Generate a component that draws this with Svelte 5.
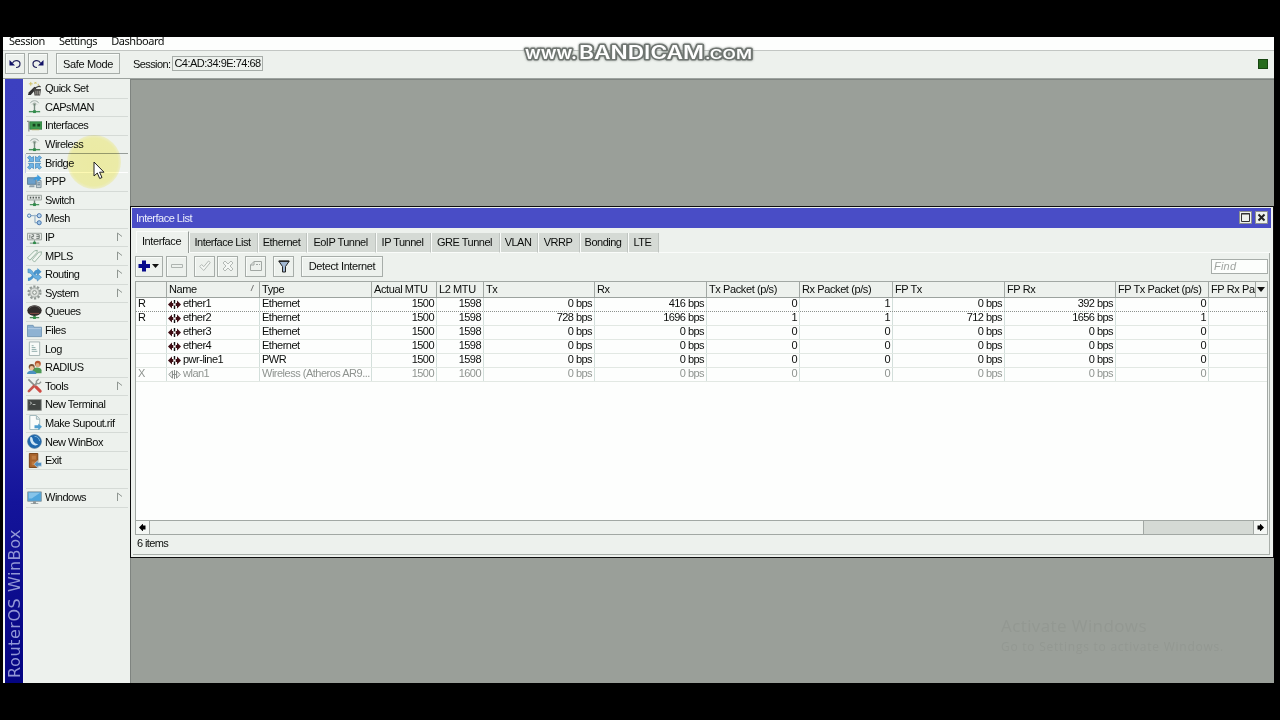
<script lang="ts">
	interface MenuItem {
		label: string;
		icon: string;
		sub?: boolean;
	}

	interface Column {
		label: string;
		width: number;
		right?: boolean;
	}

	const menu: (MenuItem | null)[] = [
		{ label: 'Quick Set', icon: 'wand' },
		{ label: 'CAPsMAN', icon: 'antenna' },
		{ label: 'Interfaces', icon: 'card' },
		{ label: 'Wireless', icon: 'antenna' },
		{ label: 'Bridge', icon: 'bridge' },
		{ label: 'PPP', icon: 'ppp' },
		{ label: 'Switch', icon: 'switch' },
		{ label: 'Mesh', icon: 'mesh' },
		{ label: 'IP', icon: 'ip', sub: true },
		{ label: 'MPLS', icon: 'mpls', sub: true },
		{ label: 'Routing', icon: 'routing', sub: true },
		{ label: 'System', icon: 'gear', sub: true },
		{ label: 'Queues', icon: 'queues' },
		{ label: 'Files', icon: 'folder' },
		{ label: 'Log', icon: 'log' },
		{ label: 'RADIUS', icon: 'users' },
		{ label: 'Tools', icon: 'tools', sub: true },
		{ label: 'New Terminal', icon: 'terminal' },
		{ label: 'Make Supout.rif', icon: 'page' },
		{ label: 'New WinBox', icon: 'winbox' },
		{ label: 'Exit', icon: 'door' },
		null,
		{ label: 'Windows', icon: 'monitor', sub: true },
	];

	const tabs = [
		{ label: 'Interface', width: 53 },
		{ label: 'Interface List', width: 69 },
		{ label: 'Ethernet', width: 49 },
		{ label: 'EoIP Tunnel', width: 69 },
		{ label: 'IP Tunnel', width: 55 },
		{ label: 'GRE Tunnel', width: 69 },
		{ label: 'VLAN', width: 38 },
		{ label: 'VRRP', width: 42 },
		{ label: 'Bonding', width: 48 },
		{ label: 'LTE', width: 31 },
	];

	const columns: Column[] = [
		{ label: '', width: 31 },
		{ label: 'Name', width: 93 },
		{ label: 'Type', width: 112 },
		{ label: 'Actual MTU', width: 65, right: true },
		{ label: 'L2 MTU', width: 47, right: true },
		{ label: 'Tx', width: 111, right: true },
		{ label: 'Rx', width: 112, right: true },
		{ label: 'Tx Packet (p/s)', width: 93, right: true },
		{ label: 'Rx Packet (p/s)', width: 93, right: true },
		{ label: 'FP Tx', width: 112, right: true },
		{ label: 'FP Rx', width: 111, right: true },
		{ label: 'FP Tx Packet (p/s)', width: 93, right: true },
		{ label: 'FP Rx Pa', width: 58 },
	];

	const idle = ['0 bps', '0 bps', '0', '0', '0 bps', '0 bps', '0', ''];
	const rows: string[][] = [
		['R', 'ether1', 'Ethernet', '1500', '1598', '0 bps', '416 bps', '0', '1', '0 bps', '392 bps', '0', ''],
		['R', 'ether2', 'Ethernet', '1500', '1598', '728 bps', '1696 bps', '1', '1', '712 bps', '1656 bps', '1', ''],
		['', 'ether3', 'Ethernet', '1500', '1598', ...idle],
		['', 'ether4', 'Ethernet', '1500', '1598', ...idle],
		['', 'pwr-line1', 'PWR', '1500', '1598', ...idle],
		['X', 'wlan1', 'Wireless (Atheros AR9...', '1500', '1600', ...idle],
	];

	let hovered = $state('Bridge');
	let activeTab = $state('Interface');
	let selected = $state(0);
</script>

{#snippet icon(name: string)}
	<svg class="icon" viewBox="0 0 16 16" width="15" height="15">
		{#if name === 'wand'}
			<path d="m1 15 1-3 6-6 2 2-6 7z" fill="#2f2f2f" />
			<path d="M7 8.500h8l-1 7H8z" fill="#4a4946" />
			<path d="M9.500 10.500v4M11.500 10.500v4M13.300 10.500v4" stroke="#c9c7bf" stroke-width=".7" />
			<path d="m7 8 6-2.500 1.500 1" fill="none" stroke="#444" stroke-width="1.300" />
			<path d="M4 1v4M2 3h4M8 1l2 2M10 1 8 3M12 3v2" stroke="#cdbf62" stroke-width="1" />
		{:else if name === 'antenna'}
			<path d="M3.500 4.500c1.500-3.500 7.500-3.500 9 0M5.500 5.800c1-2 4-2 5 0" fill="none" stroke="#9ba7a3" />
			<circle cx="8" cy="6" r="1.200" fill="#69806f" />
			<path d="M8 6v7" stroke="#788c80" stroke-width="1.500" />
			<path d="M2 13.500h12" stroke="#45925a" stroke-width="1.500" />
			<path d="M6.500 12h3v3h-3z" fill="#2f8a49" />
		{:else if name === 'card'}
			<path d="M0 3.500h2v11" fill="none" stroke="#8b928e" stroke-width="1.300" />
			<path d="M3 4h13v8H3z" fill="#3f9a4f" stroke="#2c713b" stroke-width=".7" />
			<path d="M6 6h3v3H6zM11 6h3v3h-3z" fill="#18451f" />
			<path d="M5 12.500h8" stroke="#aaa25a" />
		{:else if name === 'bridge'}
			<g fill="#6fb3e4" stroke="#347eb9" stroke-width=".7">
				<path d="m.500 3 2.300-2.300 2.300 2.300L7 1.500V7H1.500l1.700-1.800z" />
				<path d="M15.500 3 13.200.700 10.900 3 9 1.500V7h5.500l-1.700-1.800z" />
				<path d="m.500 13 2.300 2.300L5.100 13 7 14.500V9H1.500l1.700 1.800z" />
				<path d="m15.500 13-2.300 2.300-2.300-2.300L9 14.500V9h5.500l-1.700 1.800z" />
			</g>
		{:else if name === 'ppp'}
			<path d="M.500 4h9v7h-9z" fill="#6b9fca" stroke="#5f7f98" />
			<path d="M3 12h5v2H2z" fill="#8ea0aa" />
			<path d="M10 7h5v7.500h-5z" fill="#c7d3d8" stroke="#7d909a" />
			<path d="M11 9.500h3M11 11.500h3" stroke="#55738a" />
			<path d="M7 5.500c1-2 2-2.500 4-2.500V.500l4.500 4L11 8.500V6C9 6 8 6 7 7z" fill="#3d9bdc" />
		{:else if name === 'switch'}
			<path d="M.500 3.500h15v5H.500z" fill="#e1e5e2" stroke="#9aa39d" />
			<path d="M3 6h1.500M6 6h1.500M9 6h1.500M12 6h1.500" stroke="#4d5651" stroke-width="1.800" />
			<path d="M8 9v4" stroke="#71847a" stroke-width="1.500" />
			<path d="M3 13.500h10" stroke="#45925a" stroke-width="1.300" />
			<path d="M6.500 12h3v3h-3z" fill="#2f8a49" />
		{:else if name === 'mesh'}
			<path d="M4 5h4M8.500 4v8.500H12M9 5h3" fill="none" stroke="#7ea0bd" />
			<circle cx="2.300" cy="5" r="1.800" fill="#dce9f5" stroke="#4779ae" />
			<circle cx="13" cy="5" r="2.200" fill="#bcd8ee" stroke="#426faa" />
			<circle cx="13" cy="12.500" r="2.200" fill="#9fc6e7" stroke="#426faa" />
		{:else if name === 'ip'}
			<path d="M.500 3.500h15v7H.500z" fill="#e6e9e6" stroke="#969f99" />
			<path d="M3 5v4M5 5h2v2H5v2h2M10 5h3v4h-3M10 7h3" fill="none" stroke="#6f7873" />
			<path d="M8 11v3M3 14h10" stroke="#699078" />
			<path d="M6.500 12.500h3V15h-3z" fill="#2f8a49" />
		{:else if name === 'mpls'}
			<g fill="#f1f6f1" stroke="#8dab98" stroke-width=".9">
				<path d="M.500 10.500 8 3l3-.5-.5 2.500L3 13z" />
				<path d="m5.500 12.500 7-8 3-.5-.5 3L8 15z" />
			</g>
		{:else if name === 'routing'}
			<path d="M1 11.500c6 0 5-8.500 10-8.500V1l4.500 4L11 9V7c-3 0-4 8-10 8z" fill="#4b96cd" />
			<path d="M1 2c6 0 5 7 10 7V7l4.500 4-4.500 4v-2C6 13 6 6 1 6z" fill="#68afe0" stroke="#3679ae" stroke-width=".5" />
		{:else if name === 'gear'}
			<circle cx="8" cy="8" r="6.300" fill="none" stroke="#929995" stroke-width="2.500" stroke-dasharray="2.300 1.650" />
			<circle cx="8" cy="8" r="5" fill="#dadeda" stroke="#989f9b" />
			<circle cx="8" cy="8" r="2" fill="#edf1ed" stroke="#858d88" />
		{:else if name === 'queues'}
			<path d="M8 9v6M3 14.500h10" stroke="#4e8b5d" stroke-width="1.500" />
			<path d="M6.500 13h3v3h-3z" fill="#37934c" />
			<ellipse cx="8" cy="7" rx="7.700" ry="5.700" fill="#302b2a" />
			<path d="M2 5c4-4 8-4 12 0" fill="none" stroke="#6d6664" />
			<path d="M3 10h10" stroke="#8b4e49" />
		{:else if name === 'folder'}
			<path d="M.500 2.500h6l1 2h8v10H.500z" fill="#8eb2d2" stroke="#7397b6" />
			<path d="M1 6h14" stroke="#b5cee4" />
		{:else if name === 'log'}
			<path d="M2.500 1h11v14.500h-11z" fill="#f7faf8" stroke="#a2b2b1" />
			<path d="M5 5h2M5 7h4M5 9h5M5 11h6" stroke="#8daaa8" />
		{:else if name === 'users'}
			<path d="M6 11c0-4 9.500-4 9.500 0v3H6z" fill="#4d9a55" />
			<circle cx="11.500" cy="4" r="3.200" fill="#b5562f" />
			<circle cx="11.300" cy="5.500" r="2.200" fill="#dfab82" />
			<path d="M0 15c0-5 10-5 10 0z" fill="#4b91c1" />
			<circle cx="5" cy="7.500" r="3.200" fill="#765034" />
			<circle cx="5" cy="8.800" r="2.300" fill="#edc39a" />
		{:else if name === 'tools'}
			<path d="m1.500 1.500 7 7" stroke="#8b918e" stroke-width="1.800" />
			<path d="m9.500 9.500 4.500 4.500" stroke="#cf4a43" stroke-width="3.200" stroke-linecap="round" />
			<path d="m2 14 6-6" stroke="#c4574e" stroke-width="2.800" stroke-linecap="round" />
			<path d="m8 8 3-3" stroke="#929995" stroke-width="2" />
			<path d="m12.500 1-2.500 2.500v2.500h3L15 4" fill="none" stroke="#929995" stroke-width="1.500" />
		{:else if name === 'terminal'}
			<path d="M.700 2.700h14.600v11.600H.700z" fill="#404442" stroke="#969c98" />
			<path d="m3 5 2 1.500L3 8M6 8h3" fill="none" stroke="#d8ddda" stroke-width=".8" />
		{:else if name === 'page'}
			<path d="M3 .500h7l3.500 3.500v11.500H3z" fill="#fafcfa" stroke="#9db5ba" />
			<path d="M10 1v3.500h3" fill="#dce7e9" stroke="#9db5ba" />
			<path d="M8 11h4V9l4 3.500L12 16v-2H8z" fill="#4d9dce" />
		{:else if name === 'winbox'}
			<circle cx="8" cy="8" r="7.300" fill="#1f68ad" stroke="#3a6c9b" stroke-width=".8" />
			<path d="M3.500 3.500c2-1 2.500 1 2.800 3s3 4.500 5.700 4.500c-3 3-10 0-8.500-7.500z" fill="#cfe6f5" />
			<path d="M8 2.500c3 0 5 2 5.500 5" fill="none" stroke="#79b5dd" />
		{:else if name === 'door'}
			<path d="M2.500.500h9v15h-9z" fill="#a8632c" stroke="#754014" />
			<path d="M5 3h4.500v4H5zM5 9h4.500v4H5z" fill="#bd7b42" />
			<path d="M15.500 10h-4V8l-4 4 4 4v-2h4z" fill="#528ebd" stroke="#d7e6ef" stroke-width=".6" />
		{:else if name === 'monitor'}
			<path d="M.700 2h14.600v10H.700z" fill="#4fa5dc" stroke="#8b9aa0" />
			<path d="M2 3h12L5 9H2z" fill="#86c4ea" />
			<path d="M6.500 12h3v2h-3zM4 14h8v1H4z" fill="#8c9597" />
		{/if}
	</svg>
{/snippet}

<div class="screen">
	<div class="app">
		<nav class="menubar">
			<span>Session</span>
			<span>Settings</span>
			<span>Dashboard</span>
		</nav>

		<header class="toolbar">
			<button class="btn" aria-label="Undo">
				<svg width="12" height="12" viewBox="0 0 12 12">
					<path d="M3.500 5c2-4 7.500-2.500 7.500.8 0 2-1.500 3.700-4 3.700" fill="none" stroke="#25255f" stroke-width="1.200" />
					<path d="M.500 2v5.500H6z" fill="#111166" />
				</svg>
			</button>
			<button class="btn" aria-label="Redo">
				<svg width="12" height="12" viewBox="0 0 12 12">
					<path d="M8.500 5C6.500 1 1 2.500 1 5.800c0 2 1.500 3.700 4 3.700" fill="none" stroke="#25255f" stroke-width="1.200" />
					<path d="M11.500 2v5.500H6z" fill="#111166" />
				</svg>
			</button>
			<button class="btn safe">Safe Mode</button>
			<span class="session">Session:</span>
			<span class="address">C4:AD:34:9E:74:68</span>
			<span class="status-led"></span>
		</header>

		<div class="body">
			<div class="brand"><span>RouterOS WinBox</span></div>

			<aside class="sidebar">
				{#each menu as item}
					{#if item}
						<div
							class="menu-item"
							class:hovered={hovered === item.label}
							role="menuitem"
							tabindex="-1"
							onmouseenter={() => (hovered = item.label)}
						>
							{@render icon(item.icon)}
							<span class="menu-label">{item.label}</span>
							{#if item.sub}
								<svg class="sub" width="7" height="9" viewBox="0 0 7 9">
									<path d="M1.500 9V1L6 4.500" fill="none" stroke="#8f9691" />
								</svg>
							{/if}
						</div>
					{:else}
						<div class="menu-item"></div>
					{/if}
				{/each}
			</aside>

			<main class="desktop">
				<section class="window">
					<div class="titlebar">
						<span>Interface List</span>
						<div class="win-buttons">
							<svg width="13" height="13" viewBox="0 0 13 13">
								<path d="M.500.500h12v12H.500z" fill="#edf1ed" stroke="#8d918e" />
								<path d="M2.500 2.500h8v8h-8z" fill="none" stroke="#333" />
								<path d="M2 3h9" stroke="#333" />
							</svg>
							<svg width="13" height="13" viewBox="0 0 13 13">
								<path d="M.500.500h12v12H.500z" fill="#edf1ed" stroke="#8d918e" />
								<path d="m3.500 3.500 6 6M9.500 3.500l-6 6" stroke="#222" stroke-width="2" />
							</svg>
						</div>
					</div>

					<div class="tabs">
						{#each tabs as tab}
							<button
								class="tab"
								class:active={activeTab === tab.label}
								style="width: {tab.width}px"
								onclick={() => (activeTab = tab.label)}
							>
								<span>{tab.label}</span>
							</button>
						{/each}
						<div class="tabs-rest"></div>
					</div>

					<div class="panel">
						<div class="actions">
							<button class="btn add" aria-label="Add">
								<svg width="22" height="12" viewBox="0 0 22 12">
									<path d="M4 .500h4v3.500h4v4H8v3.500H4V8H.500V4H4z" fill="#070b8c" />
									<path d="M14 4h7l-3.500 4z" fill="#111" />
								</svg>
							</button>
							<button class="btn tool" aria-label="Remove">
								<svg width="12" height="6" viewBox="0 0 12 6">
									<path d="M.500 1.500h11v3H.500z" fill="none" stroke="#aeb4b0" />
								</svg>
							</button>
							<button class="btn tool gap-l" aria-label="Enable">
								<svg width="12" height="12" viewBox="0 0 12 12">
									<path d="m.700 6.500 2-2 2 2.200L9.500 1l1.800 1.500-6.500 8z" fill="#f4f7f4" stroke="#b3b9b5" />
								</svg>
							</button>
							<button class="btn tool" aria-label="Disable">
								<svg width="12" height="12" viewBox="0 0 12 12">
									<path d="m1 3 2-2 3 3 3-3 2 2-3 3 3 3-2 2-3-3-3 3-2-2 3-3z" fill="#f4f7f4" stroke="#b3b9b5" />
								</svg>
							</button>
							<button class="btn tool gap-l" aria-label="Comment">
								<svg width="12" height="11" viewBox="0 0 12 11">
									<path d="M4 .500h7.500v9H.500V4zM4 .500V4H.500M6 3.500h2M9 3.500h1" fill="none" stroke="#a1a7a3" />
								</svg>
							</button>
							<button class="btn tool gap-l" aria-label="Filter">
								<svg width="12" height="13" viewBox="0 0 12 13">
									<path d="M.700 1h10.600L7.500 6.500V12h-3V6.500z" fill="#a2b8d2" stroke="#222" />
									<path d="M1 1.300h10" stroke="#222" stroke-width="1.300" />
								</svg>
							</button>
							<button class="btn detect">Detect Internet</button>
							<input class="find" placeholder="Find" />
						</div>

						<div class="table">
							<div class="row head">
								{#each columns as col}
									<div class="cell" style="width: {col.width}px">
										<span>{col.label}</span>
										{#if col.label === 'Name'}
											<svg class="sort" width="5" height="6" viewBox="0 0 5 6">
												<path d="M1 6 3.500 0" stroke="#777" />
											</svg>
										{:else if col.label === 'FP Rx Pa'}
											<span class="col-menu"></span>
										{/if}
									</div>
								{/each}
							</div>
							{#each rows as row, i}
								<div
									class="row"
									class:selected={selected === i}
									class:disabled={row[0] === 'X'}
									role="row"
									tabindex="-1"
									onmousedown={() => (selected = i)}
								>
									{#each row as value, c}
										<div class="cell data" class:right={columns[c].right} style="width: {columns[c].width}px">
											{#if c === 1}
												<svg class="port" width="13" height="9" viewBox="0 0 13 9">
													{#if row[0] === 'X'}
														<path d="M4.500.800.800 4.500l3.700 3.700zM8.500.800l3.700 3.700-3.700 3.700zM4.500 4.500h4M6.500 0v9" fill="#eee" stroke="#8b8f8c" />
													{:else}
														<path d="M4 .500v2.500h1.300v3H4v2.500l-4-4zM9 .500v2.500H7.700v3H9v2.500l4-4z" fill="#3f0d14" />
														<path d="M6.500 0v3.500M6.500 5.500V9" stroke="#111" stroke-width="1.400" />
													{/if}
												</svg>
											{/if}
											<span>{value}</span>
										</div>
									{/each}
								</div>
							{/each}

							<div class="scrollbar">
								<div class="arrow">
									<svg width="7" height="7" viewBox="0 0 7 7"><path d="M0 3.500 3.500 0H4v1.500h2.500v4H4V7h-.5z" /></svg>
								</div>
								<div class="thumb"></div>
								<div class="track"></div>
								<div class="arrow">
									<svg width="7" height="7" viewBox="0 0 7 7"><path d="M7 3.500 3.500 0H3v1.500H.500v4H3V7h.5z" /></svg>
								</div>
							</div>
						</div>
						<footer>6 items</footer>
					</div>
				</section>

				<div class="activate">
					<div class="activate-title">Activate Windows</div>
					<div>Go to Settings to activate Windows.</div>
				</div>
			</main>
		</div>
	</div>

	<svg class="recorder" width="240" height="30" viewBox="0 0 240 30">
		<g class="recorder-text">
			<text x="6" y="21" font-size="17" textLength="52" lengthAdjust="spacingAndGlyphs">www.</text>
			<text x="60" y="21" font-size="18" textLength="125" lengthAdjust="spacingAndGlyphs">BANDICAM</text>
			<text x="186" y="21" font-size="12.500" textLength="47" lengthAdjust="spacingAndGlyphs">.COM</text>
		</g>
	</svg>

	<div class="halo"></div>
	<svg class="pointer" width="12" height="19" viewBox="0 0 12 19">
		<path d="M1 1v14l3.300-3 2.400 5.500 2.300-1-2.400-5.300H11z" fill="#fff" stroke="#222" />
	</svg>
</div>

<style>
	:global(body) {
		background: #000;
		overflow: hidden;
	}

	* {
		box-sizing: border-box;
	}

	.screen {
		position: relative;
		width: 1280px;
		height: 720px;
		padding: 37px 6px 37px 3px;
		background: #000;
		color: #0c0e0c;
		font: 11px/14px 'Liberation Sans', Arial, sans-serif;
		letter-spacing: -0.5px;
		white-space: nowrap;
	}

	button,
	input {
		font: inherit;
		letter-spacing: inherit;
		color: inherit;
	}

	.app {
		display: flex;
		flex-direction: column;
		height: 646px;
		background: #edf1ed;
	}

	.menubar {
		display: flex;
		gap: 14px;
		height: 14px;
		padding-left: 6px;
		background: #fdfefd;
		border-bottom: 1px solid #c2c6c3;
		font: 11px/8px 'Noto Sans', sans-serif;
		letter-spacing: -0.45px;
	}

	.toolbar {
		display: flex;
		align-items: center;
		height: 28px;
		padding: 0 6px 2px 2px;
		border-bottom: 1px solid #9da39f;
	}

	.btn {
		display: flex;
		align-items: center;
		justify-content: center;
		flex-shrink: 0;
		width: 20px;
		height: 21px;
		margin: 0 3px 0 0;
		padding: 0;
		background: #edf1ed;
		border: 1px solid #a7ada9;
		box-shadow: inset 1px 1px #f9fcf9;
	}

	.safe {
		width: 64px;
		margin-left: 5px;
		letter-spacing: -0.35px;
	}

	.session {
		margin-left: 10px;
		letter-spacing: -0.6px;
	}

	.address {
		width: 91px;
		height: 15px;
		margin-left: 2px;
		padding-left: 1px;
		border: 1px solid #a7ada9;
		line-height: 12px;
		letter-spacing: -0.5px;
	}

	.status-led {
		width: 10px;
		height: 10px;
		margin-left: auto;
		background: #276b1d;
		border: 1px solid #174611;
	}

	.body {
		display: flex;
		flex: 1;
		min-height: 0;
	}

	.brand {
		display: flex;
		align-items: flex-end;
		justify-content: center;
		width: 21px;
		padding: 0 0 5px 2px;
		background: linear-gradient(#3c40c0 0, #3a3dbd 35%, #14149a 70%, #050582 100%);
		border-left: 2px solid #f3f6f3;
		border-right: 1px solid #f3f6f3;
		color: #9297d6;
		font: 16px/18px 'DejaVu Sans', sans-serif;
		letter-spacing: 0.55px;
	}

	.brand span {
		writing-mode: vertical-rl;
		transform: rotate(180deg);
	}

	.sidebar {
		width: 106px;
		padding: 1px 2px 0 2px;
	}

	.menu-item {
		display: flex;
		align-items: center;
		height: 18.6px;
		padding: 0 0 1px 1px;
		border-bottom: 1px solid #d5dad6;
	}

	.menu-item.hovered {
		border-bottom-color: #fff;
		box-shadow: 0 -1px #969d99, -1px 0 #c3cbe9;
	}

	.icon {
		flex-shrink: 0;
	}

	.menu-label {
		margin-left: 3px;
	}

	.sub {
		margin: 0 5px 1px auto;
	}

	.desktop {
		position: relative;
		flex: 1;
		background: #9a9f99;
		border-left: 1px solid #7f8480;
		border-top: 1px solid #7f8480;
	}

	.window {
		position: absolute;
		left: -1px;
		top: 126px;
		display: flex;
		flex-direction: column;
		width: 1144px;
		height: 352px;
		padding: 1px 2px 2px 1px;
		background: #edf1ed;
		border: 1px solid #0d0d0d;
	}

	.titlebar {
		display: flex;
		align-items: center;
		justify-content: space-between;
		height: 20px;
		padding: 0 3px 1px 4px;
		background: #494dc6;
		color: #eceefc;
	}

	.win-buttons {
		display: flex;
		gap: 3px;
	}

	.tabs {
		display: flex;
		align-items: flex-end;
		height: 25px;
		padding: 0 1px 0 4px;
	}

	.tab {
		display: flex;
		align-items: center;
		justify-content: center;
		height: 20px;
		margin: 0;
		padding: 0 2px 1px 0;
		background: #d5dad5;
		border: 0;
		border-left: 1px solid #fafcfa;
		border-right: 1px solid #bfc4c0;
		border-bottom: 1px solid #fafcfa;
	}

	.tab.active {
		height: 22px;
		padding: 0 2px 3px 0;
		background: #edf1ed;
		border-top: 1px solid #fafcfa;
		border-bottom: 0;
		border-right-color: #959b97;
		letter-spacing: -0.4px;
	}

	.tabs-rest {
		flex: 1;
		border-bottom: 1px solid #fafcfa;
	}

	.panel {
		display: flex;
		flex-direction: column;
		flex: 1;
		margin: 0 1px 0 1px;
		padding: 2px 1px 0 2px;
		border-right: 1px solid #a9afaa;
		border-bottom: 1px solid #a9afaa;
	}

	.actions {
		display: flex;
		align-items: center;
		height: 22px;
	}

	.add {
		width: 28px;
	}

	.tool {
		width: 21px;
		margin-right: 2px;
	}

	.gap-l {
		margin-left: 5px;
	}

	.detect {
		width: 82px;
		margin-left: 5px;
		letter-spacing: -0.38px;
	}

	.find {
		width: 57px;
		height: 15px;
		margin-left: auto;
		padding: 0 2px;
		background: #fcfefc;
		border: 1px solid #a7ada9;
		border-radius: 0;
		font-style: italic;
		letter-spacing: 0.2px;
	}

	.find::placeholder {
		color: #a0a5a1;
		opacity: 1;
	}

	.table {
		display: flex;
		flex-direction: column;
		height: 254px;
		margin-top: 4px;
		background: #fdfefd;
		border: 1px solid #a2a8a4;
	}

	.row {
		display: flex;
		height: 14px;
		border-bottom: 1px solid #e2e8e3;
	}

	.cell {
		display: flex;
		align-items: center;
		flex-shrink: 0;
		padding: 0 2px;
		border-right: 1px solid #d3dfdb;
		overflow: hidden;
		line-height: 13px;
	}

	.cell.data {
		padding-bottom: 2px;
		line-height: 11px;
	}

	.cell:last-child {
		border-right: 0;
	}

	.cell.right {
		justify-content: flex-end;
	}

	.cell.right span {
		letter-spacing: -0.55px;
	}

	.row.head {
		height: 16px;
		background: #edf1ed;
		border-bottom-color: #9ca29e;
		letter-spacing: -0.4px;
	}

	.head .cell {
		border-right-color: #a2a8a4;
	}

	.head .cell:last-child {
		padding-right: 0;
	}

	.selected {
		border-bottom: 1px dotted #8c918d;
	}

	.disabled {
		color: #8f9490;
	}

	.port {
		flex-shrink: 0;
		margin: 1px 2px 0 -1px;
	}

	.sort {
		margin: 0 2px 3px auto;
	}

	.col-menu {
		display: flex;
		align-items: center;
		justify-content: center;
		width: 14px;
		height: 15px;
		margin-left: auto;
		background: #edf1ed;
		border-left: 1px solid #a2a8a4;
	}

	.col-menu::before {
		content: '';
		border: 4.5px solid transparent;
		border-top: 5px solid #111;
		border-bottom: 0;
	}

	.scrollbar {
		display: flex;
		height: 14px;
		margin-top: auto;
		border-top: 1px solid #a2a8a4;
	}

	.arrow {
		display: flex;
		align-items: center;
		justify-content: center;
		width: 13px;
		background: #f4f7f4;
	}

	.thumb {
		width: 995px;
		background: #edf1ed;
		border-left: 1px solid #a2a8a4;
		border-right: 1px solid #a2a8a4;
	}

	.track {
		flex: 1;
		background: #d5dad5;
		border-right: 1px solid #a2a8a4;
	}

	footer {
		padding: 1px 2px 0;
		letter-spacing: -0.6px;
	}

	.activate {
		position: absolute;
		left: 870px;
		top: 533px;
		color: #939892;
		font: 12px/16px 'Open Sans', sans-serif;
		letter-spacing: 0.75px;
	}

	.activate-title {
		font-size: 17px;
		line-height: 26px;
		letter-spacing: 0.4px;
	}

	.recorder {
		position: absolute;
		left: 519px;
		top: 38px;
	}

	.recorder-text {
		fill: #fff;
		stroke: #6f7571;
		stroke-width: 3px;
		stroke-linejoin: round;
		paint-order: stroke;
		font-family: Inter, sans-serif;
		font-weight: 600;
		letter-spacing: 0;
		filter: drop-shadow(0 0 1px #8b908c);
	}

	.halo {
		position: absolute;
		left: 67px;
		top: 135px;
		width: 54px;
		height: 54px;
		border-radius: 50%;
		background: radial-gradient(closest-side, #fdf8b0 0, #fdf9b4 88%, #fefbd8 100%);
		mix-blend-mode: multiply;
		pointer-events: none;
	}

	.pointer {
		position: absolute;
		left: 93px;
		top: 161px;
		pointer-events: none;
	}
</style>
